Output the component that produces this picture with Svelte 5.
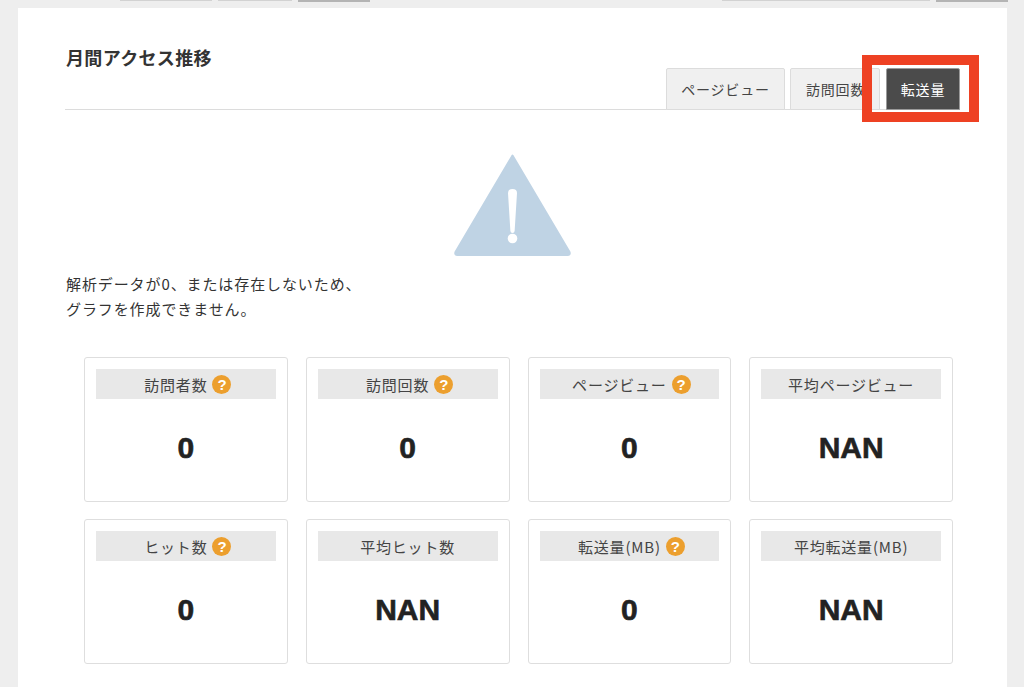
<script>
  const stats = [
    { label: '訪問者数', value: '0', help: true },
    { label: '訪問回数', value: '0', help: true },
    { label: 'ページビュー', value: '0', help: true },
    { label: '平均ページビュー', value: 'NAN', help: false },
    { label: 'ヒット数', value: '0', help: true },
    { label: '平均ヒット数', value: 'NAN', help: false },
    { label: '転送量(MB)', value: '0', help: true },
    { label: '平均転送量(MB)', value: 'NAN', help: false }
  ];
</script>

<div class="page">
  <div class="topbar">
    <div class="slivers">
      <span class="sl s1"></span>
      <span class="sl s2"></span>
      <span class="sl s3"></span>
    </div>
    <div class="slivers">
      <span class="sl s4"></span>
      <span class="sl s5"></span>
    </div>
  </div>

  <main class="panel">
    <header class="head">
      <h2>月間アクセス推移</h2>
      <nav class="tabs">
        <button class="tab t1">ページビュー</button>
        <button class="tab t2">訪問回数</button>
        <button class="tab active">転送量</button>
      </nav>
      <div class="highlight"></div>
    </header>

    <div class="warn">
      <svg width="119" height="104" viewBox="0 0 119 104" aria-hidden="true">
        <path d="M59.5 2.5 L116.5 99 Q117.5 102 114.5 102 L4.5 102 Q1.5 102 2.5 99 Z" fill="#bfd3e4" stroke="#bfd3e4" stroke-width="2" stroke-linejoin="round" />
        <path d="M55 40 Q55 36 59.5 36 Q64 36 64 40 L61.6 78 Q61.4 80 59.5 80 Q57.6 80 57.4 78 Z" fill="#fff" />
        <circle cx="59.5" cy="85.5" r="4.8" fill="#fff" />
      </svg>
    </div>

    <p class="msg">解析データが0、または存在しないため、<br />グラフを作成できません。</p>

    <section class="grid">
      {#each stats as s}
        <article class="card">
          <div class="label" class:has-help={s.help}>
            <span>{s.label}</span>
            {#if s.help}<i class="help">?</i>{/if}
          </div>
          <div class="value">{s.value}</div>
        </article>
      {/each}
    </section>
  </main>
</div>

<style>
  :global(body) {
    margin: 0;
    background: #eeeeee;
    overflow: hidden;
  }
  .page {
    width: 1024px;
    height: 687px;
    overflow: hidden;
    font-family: "Noto Sans CJK JP", "Noto Sans", sans-serif;
    color: #333;
  }
  .topbar {
    height: 8px;
    display: flex;
    justify-content: space-between;
    padding: 0 16px 0 120px;
    box-sizing: border-box;
  }
  .slivers {
    display: flex;
    gap: 6px;
    align-items: flex-start;
  }
  .sl {
    display: block;
    height: 1px;
    background: #d2d2d2;
  }
  .s1 { width: 92px; }
  .s2 { width: 74px; }
  .s3 { width: 72px; height: 2px; background: #b4b4b4; }
  .s4 { width: 208px; }
  .s5 { width: 72px; height: 2px; background: #b4b4b4; }

  .panel {
    margin-left: 18px;
    width: 989px;
    height: 679px;
    background: #fff;
    box-sizing: border-box;
    padding: 0 47px;
  }
  .head {
    position: relative;
    height: 102px;
    box-sizing: border-box;
    display: flex;
    justify-content: space-between;
    align-items: flex-end;
    border-bottom: 1px solid #dcdcdc;
  }
  h2 {
    align-self: flex-start;
    margin: 35px 0 0 1px;
    font-size: 18px;
    line-height: 28px;
    letter-spacing: 0.35px;
    font-weight: 700;
    color: #333;
  }
  .tabs {
    display: flex;
    gap: 5px;
  }
  .tab {
    height: 42px;
    margin-bottom: -1px;
    box-sizing: border-box;
    border: 1px solid #dcdcdc;
    border-radius: 2px 2px 0 0;
    background: #f0f0f0;
    color: #444;
    font: inherit;
    font-size: 14px;
    letter-spacing: 0.8px;
    padding: 0;
  }
  .t1 { width: 119px; }
  .t2 { width: 90px; text-align: left; padding-left: 15px; overflow: hidden; white-space: nowrap; }
  .tab.active {
    width: 74px;
    margin-left: 1px;
    background: #4b4b4b;
    border-color: #9a9a9a;
    color: #fff;
  }
  .highlight {
    position: absolute;
    left: 797px;
    top: 47px;
    width: 117px;
    height: 67px;
    box-sizing: border-box;
    border: 10px solid #ee4123;
    pointer-events: none;
  }
  .warn {
    display: flex;
    justify-content: center;
    margin-top: 43px;
    padding-right: 1px;
    height: 104px;
  }
  .warn svg { display: block; }
  .msg {
    margin: 14px 0 0 1px;
    font-size: 15px;
    line-height: 25px;
    letter-spacing: 0.9px;
    color: #333;
  }
  .grid {
    margin: 36px 7px 0 19px;
    display: grid;
    grid-template-columns: repeat(4, 1fr);
    grid-auto-rows: 144.5px;
    gap: 17.5px 18px;
  }
  .card {
    box-sizing: border-box;
    border: 1px solid #dedede;
    border-radius: 3px;
    padding: 11px;
    display: flex;
    flex-direction: column;
  }
  .label {
    height: 30px;
    background: #e8e8e8;
    display: flex;
    align-items: center;
    justify-content: center;
    gap: 5px;
    font-size: 15px;
    letter-spacing: 0.8px;
    color: #444;
  }
  .label.has-help {
    padding-left: 4px;
  }
  .help {
    width: 19px;
    height: 19px;
    border-radius: 50%;
    background: #ec9f2e;
    color: #fff;
    font-family: "Liberation Sans", sans-serif;
    font-style: normal;
    font-weight: 700;
    font-size: 15px;
    letter-spacing: 0;
    line-height: 19px;
    text-align: center;
  }
  .value {
    margin-top: 31px;
    text-align: center;
    font-family: "Liberation Sans", sans-serif;
    font-weight: 700;
    font-size: 30px;
    line-height: 36px;
    color: #222;
    -webkit-text-stroke: 0.6px #222;
  }
</style>
